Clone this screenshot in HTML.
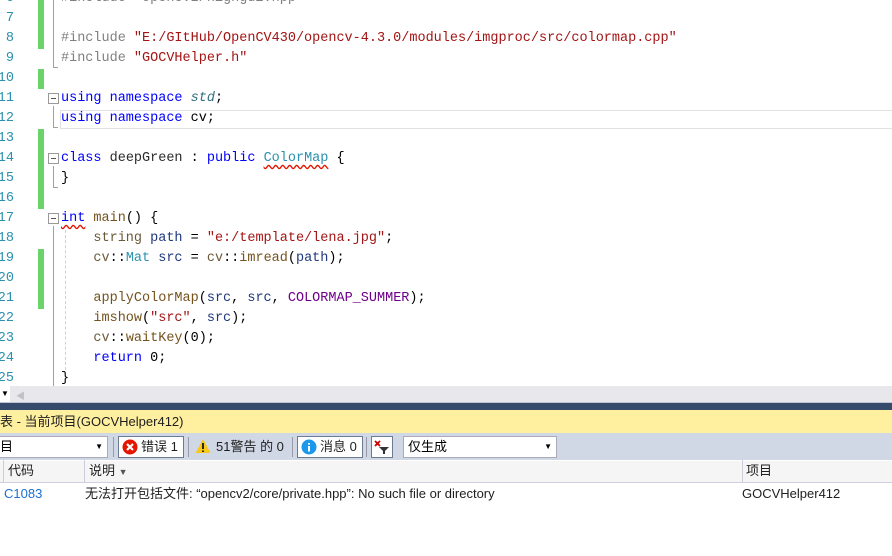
<!DOCTYPE html>
<html><head><meta charset="utf-8"><style>
body{margin:0;width:892px;height:556px;overflow:hidden;background:#fff;position:relative;font-family:"Liberation Sans","Noto Sans CJK SC",sans-serif}
.ln{position:absolute;right:878px;width:30px;text-align:right;font:13.5px "Liberation Mono",monospace;color:#2b91af;height:20px;line-height:20px}
.c{position:absolute;left:61px;font:13.5px "Liberation Mono","Noto Sans CJK SC",monospace;white-space:pre;height:20px;line-height:20px;color:#000}
.g{position:absolute;left:38px;width:6px;background:#6ad36a}
.k{color:#0000ff}.s{color:#a31515}.p{color:#808080}.t{color:#2b91af}.f{color:#74531f}.v{color:#1f377f}.m{color:#6f008a}.n{color:#2f6f7f;font-style:italic}.b{color:#6b5a3a}.d{color:#2b2b2b}
.box{position:absolute;left:48px;width:9px;height:9px;border:1px solid #999;background:#fff}
.box:after{content:"";position:absolute;left:2px;top:4px;width:5px;height:1px;background:#555}
.vl{position:absolute;left:53px;width:1px;background:#a0a0a0}
.sq{text-decoration:underline wavy #e51400;text-underline-offset:3px}
.btn{position:absolute;top:436px;height:20px;border:1px solid #6d7a94;background:#fff;font-size:13px;line-height:20px;color:#1e1e1e}
</style></head><body>
<div class="ln" style="top:-11px">6</div><div class="ln" style="top:9px">7</div><div class="ln" style="top:29px">8</div><div class="ln" style="top:49px">9</div>
<div class="ln" style="top:69px">10</div><div class="ln" style="top:89px">11</div><div class="ln" style="top:109px">12</div><div class="ln" style="top:129px">13</div>
<div class="ln" style="top:149px">14</div><div class="ln" style="top:169px">15</div><div class="ln" style="top:189px">16</div><div class="ln" style="top:209px">17</div>
<div class="ln" style="top:229px">18</div><div class="ln" style="top:249px">19</div><div class="ln" style="top:269px">20</div><div class="ln" style="top:289px">21</div>
<div class="ln" style="top:309px">22</div><div class="ln" style="top:329px">23</div><div class="ln" style="top:349px">24</div><div class="ln" style="top:369px">25</div>
<div class="g" style="top:0;height:49px"></div>
<div class="g" style="top:69px;height:20px"></div>
<div class="g" style="top:129px;height:80px"></div>
<div class="g" style="top:249px;height:60px"></div>
<div class="vl" style="top:0;height:68px"></div><div style="position:absolute;left:53px;top:67px;width:5px;height:1px;background:#a0a0a0"></div>
<div class="vl" style="top:106px;height:22px"></div><div style="position:absolute;left:53px;top:127px;width:5px;height:1px;background:#a0a0a0"></div>
<div class="vl" style="top:166px;height:22px"></div><div style="position:absolute;left:53px;top:187px;width:5px;height:1px;background:#a0a0a0"></div>
<div class="vl" style="top:226px;height:160px"></div>
<div style="position:absolute;left:65px;top:230px;height:140px;border-left:1px dashed #d0d0d0"></div>
<div class="box" style="top:93px"></div><div class="box" style="top:153px"></div><div class="box" style="top:213px"></div>
<div style="position:absolute;left:60px;top:110px;width:840px;height:17px;border:1px solid #e2e2e2"></div>
<div class="c p" style="top:-11px">#include &lt;opencv2/highgui.hpp&gt;</div>
<div class="c" style="top:29px"><span class="p">#include </span><span class="s">"E:/GItHub/OpenCV430/opencv-4.3.0/modules/imgproc/src/colormap.cpp"</span></div>
<div class="c" style="top:49px"><span class="p">#include </span><span class="s">"GOCVHelper.h"</span></div>
<div class="c" style="top:89px"><span class="k">using namespace</span> <span class="n">std</span>;</div>
<div class="c" style="top:109px"><span class="k">using namespace</span> cv;</div>
<div class="c" style="top:149px"><span class="k">class</span> <span class="d">deepGreen</span> : <span class="k">public</span> <span class="t sq">ColorMap</span> {</div>
<div class="c" style="top:169px">}</div>
<div class="c" style="top:209px"><span class="k sq">int</span> <span class="f">main</span>() {</div>
<div class="c" style="top:229px">    <span class="b">string</span> <span class="v">path</span> = <span class="s">"e:/template/lena.jpg"</span>;</div>
<div class="c" style="top:249px">    <span class="b">cv</span>::<span class="t">Mat</span> <span class="v">src</span> = <span class="b">cv</span>::<span class="f">imread</span>(<span class="v">path</span>);</div>
<div class="c" style="top:289px">    <span class="f">applyColorMap</span>(<span class="v">src</span>, <span class="v">src</span>, <span class="m">COLORMAP_SUMMER</span>);</div>
<div class="c" style="top:309px">    <span class="f">imshow</span>(<span class="s">"src"</span>, <span class="v">src</span>);</div>
<div class="c" style="top:329px">    <span class="b">cv</span>::<span class="f">waitKey</span>(0);</div>
<div class="c" style="top:349px">    <span class="k">return</span> 0;</div>
<div class="c" style="top:369px">}</div>
<div style="position:absolute;left:0;top:386px;width:892px;height:16px;background:#e8e8ec"></div>
<div style="position:absolute;left:0;top:386px;width:10px;height:16px;background:#fff;font-size:8px;line-height:16px;text-align:center">▼</div>
<div style="position:absolute;left:16px;top:389px;color:#c0c0c8;font-size:9px">◀</div>
<div style="position:absolute;left:0;top:402px;width:892px;height:3px;background:#c0c6d6"></div>
<div style="position:absolute;left:0;top:403px;width:892px;height:7px;background:#364a6b"></div>
<div style="position:absolute;left:0;top:410px;width:892px;height:23px;background:#fff0a0;font-size:13px;line-height:23px;color:#1e1e1e;white-space:nowrap">表 - 当前项目(GOCVHelper412)</div>
<div style="position:absolute;left:0;top:433px;width:892px;height:27px;background:#d0d7e5"></div>
<div style="position:absolute;left:-1px;top:436px;width:107px;height:20px;border:1px solid #aab;background:#fff;font-size:13px;line-height:20px">目<span style="position:absolute;right:4px;font-size:8px">▼</span></div>
<div style="position:absolute;left:113px;top:437px;width:1px;height:20px;background:#99a"></div>
<div class="btn" style="left:118px;width:64px"><svg style="position:absolute;left:3px;top:2px" width="16" height="16"><circle cx="8" cy="8" r="7.5" fill="#e51400"/><path d="M5 5l6 6M11 5l-6 6" stroke="#fff" stroke-width="2.2"/></svg><span style="position:absolute;left:22px">错误 1</span></div>
<div style="position:absolute;left:188px;top:437px;width:1px;height:20px;background:#99a"></div>
<svg style="position:absolute;left:195px;top:438px" width="16" height="16"><path d="M8 1L15.5 15H.5Z" fill="#f8c81e"/><path d="M8 5v6M8 12.5v1.5" stroke="#000" stroke-width="1.6"/></svg>
<div style="position:absolute;left:216px;top:436px;font-size:13px;line-height:22px;color:#1e1e1e;white-space:nowrap">51警告 的 0</div>
<div style="position:absolute;left:292px;top:437px;width:1px;height:20px;background:#99a"></div>
<div class="btn" style="left:297px;width:64px"><svg style="position:absolute;left:3px;top:2px" width="16" height="16"><circle cx="8" cy="8" r="7.5" fill="#1c97ea"/><path d="M8 7v5.5M8 4v1.6" stroke="#fff" stroke-width="2"/></svg><span style="position:absolute;left:22px">消息 0</span></div>
<div style="position:absolute;left:366px;top:437px;width:1px;height:20px;background:#99a"></div>
<div class="btn" style="left:371px;width:20px"><svg style="position:absolute;left:2px;top:2px" width="16" height="16"><path d="M1 2l5 5M6 2l-5 5" stroke="#c00" stroke-width="1.8"/><path d="M5 8h10l-4 4v3h-2v-3z" fill="#333"/></svg></div>
<div style="position:absolute;left:403px;top:436px;width:148px;height:20px;border:1px solid #aab;background:#fff;font-size:13px;line-height:20px;padding-left:4px;box-sizing:content-box">仅生成<span style="position:absolute;right:4px;font-size:8px">▼</span></div>
<div style="position:absolute;left:0;top:460px;width:892px;height:21px;background:#f5f5f5;border-top:1px solid #fff;border-bottom:1px solid #d0d0e0"></div>
<div style="position:absolute;left:3px;top:460px;width:1px;height:22px;background:#ccd"></div>
<div style="position:absolute;left:84px;top:460px;width:1px;height:22px;background:#ccd"></div>
<div style="position:absolute;left:742px;top:460px;width:1px;height:22px;background:#ccd"></div>
<div style="position:absolute;left:8px;top:461px;font-size:13px;line-height:20px;color:#1e1e1e">代码</div>
<div style="position:absolute;left:89px;top:461px;font-size:13px;line-height:20px;color:#1e1e1e">说明 <span style="font-size:9px;color:#555">▼</span></div>
<div style="position:absolute;left:746px;top:461px;font-size:13px;line-height:20px;color:#1e1e1e">项目</div>
<div style="position:absolute;left:4px;top:484px;font-size:13px;line-height:20px;color:#1c6fd0">C1083</div>
<div style="position:absolute;left:85px;top:484px;font-size:13px;line-height:20px;color:#1e1e1e;white-space:nowrap">无法打开包括文件: “opencv2/core/private.hpp”: No such file or directory</div>
<div style="position:absolute;left:742px;top:484px;font-size:13px;line-height:20px;color:#1e1e1e">GOCVHelper412</div>
</body></html>
